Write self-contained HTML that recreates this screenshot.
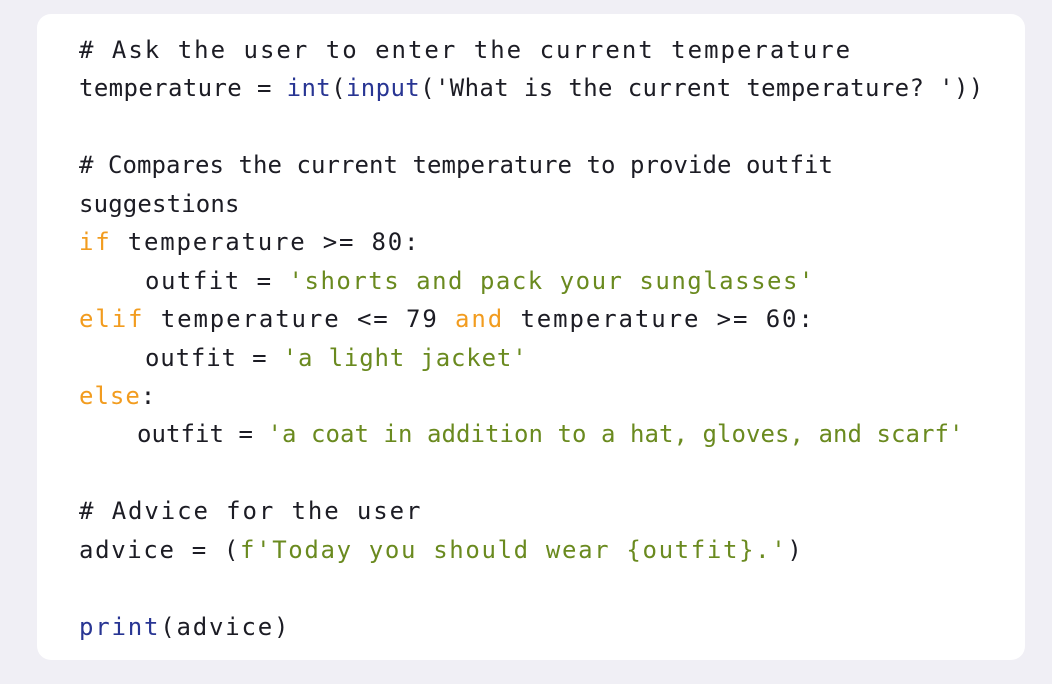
<!DOCTYPE html>
<html><head><meta charset="utf-8"><style>
html,body{margin:0;padding:0;}
body{width:1052px;height:684px;background:#f0eff5;position:relative;overflow:hidden;}
.card{position:absolute;left:37px;top:14px;width:988px;height:646px;background:#fff;border-radius:14px;}
.c{position:absolute;left:79px;top:31px;font-family:"DejaVu Sans Mono","Liberation Mono",monospace;font-size:24px;line-height:38.45px;color:#1c1c24;}
.c div{white-space:pre;height:38.45px;}
.b{color:#283593;}
.k{color:#f29c1f;}
.s{color:#6a8a1f;}
</style></head><body>
<div class="card"></div>
<div class="c">
<div style="letter-spacing:2px"># Ask the user to enter the current temperature</div>
<div style="letter-spacing:0.38px">temperature = <span class="b">int</span>(<span class="b">input</span>('What is the current temperature? '))</div>
<div></div>
<div style="letter-spacing:0.05px"># Compares the current temperature to provide outfit</div>
<div style="letter-spacing:0.15px">suggestions</div>
<div style="letter-spacing:1.8px"><span class="k">if</span> temperature &gt;= 80:</div>
<div style="letter-spacing:1.5px;padding-left:66px">outfit = <span class="s">'shorts and pack your sunglasses'</span></div>
<div style="letter-spacing:1.9px"><span class="k">elif</span> temperature &lt;= 79 <span class="k">and</span> temperature &gt;= 60:</div>
<div style="letter-spacing:0.85px;padding-left:66px">outfit = <span class="s">'a light jacket'</span></div>
<div style="letter-spacing:1px"><span class="k">else</span>:</div>
<div style="letter-spacing:0.05px;padding-left:58px">outfit = <span class="s">'a coat in addition to a hat, gloves, and scarf'</span></div>
<div></div>
<div style="letter-spacing:1.9px"># Advice for the user</div>
<div style="letter-spacing:1.65px">advice = (<span class="s">f'Today you should wear {outfit}.'</span>)</div>
<div></div>
<div style="letter-spacing:1.8px"><span class="b">print</span>(advice)</div>
</div>
</body></html>
